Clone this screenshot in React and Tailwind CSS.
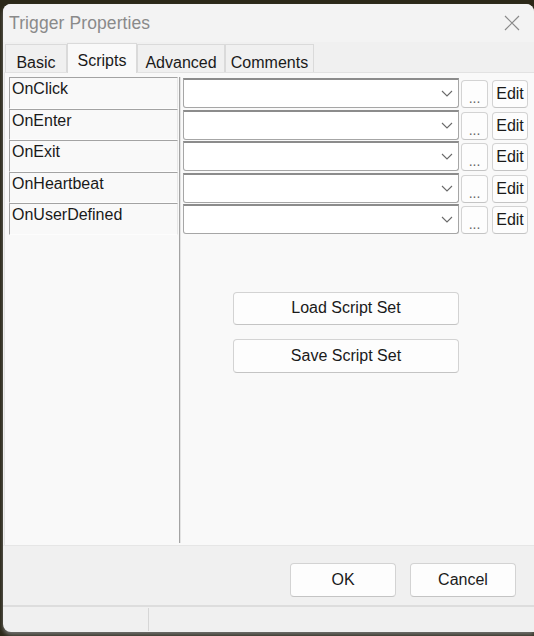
import React from 'react';

const events = ['OnClick', 'OnEnter', 'OnExit', 'OnHeartbeat', 'OnUserDefined'];
const tabs = ['Basic', 'Scripts', 'Advanced', 'Comments'];

function Chevron() {
  return (
    <svg width="12" height="7" viewBox="0 0 12 7" className="shrink-0">
      <path d="M1 1 L6 6 L11 1" fill="none" stroke="#6b6b6b" strokeWidth="1.1" />
    </svg>
  );
}

function SmallButton({ children, className = '' }) {
  return (
    <div
      className={`flex items-center justify-center bg-[#fdfdfd] border border-[#d3d3d3] border-b-[#c4c4c4] rounded-[4px] ${className}`}
    >
      {children}
    </div>
  );
}

export default function App() {
  return (
    <div className="w-[534px] h-[636px] overflow-hidden bg-[#2b2818] pt-[4px] pl-[3px] font-['Liberation_Sans',Arial,sans-serif] text-[16px] text-[#1a1a1a]">
      <div className="w-[531px] h-[628px] flex flex-col bg-[#f0f0f0] rounded-t-[8px] rounded-bl-[8px] overflow-hidden shadow-[0_3px_4px_rgba(120,120,120,0.9)]">
        {/* title bar */}
        <div className="h-[38px] shrink-0 flex items-center justify-between bg-[#f3f3f3] pl-[6px] pr-[14px]">
          <span className="text-[17.5px] text-[#8a8a8a] tracking-[0.1px]">Trigger Properties</span>
          <svg width="16" height="16" viewBox="0 0 16 16">
            <path d="M1 1 L15 15 M15 1 L1 15" stroke="#8a8a8a" strokeWidth="1.2" />
          </svg>
        </div>

        {/* tab strip */}
        <div className="h-[30px] shrink-0 flex items-end pl-[2px] pt-[1px]">
          {tabs.map((t) => {
            const active = t === 'Scripts';
            return active ? (
              <div
                key={t}
                className="relative z-10 h-[30px] -mb-px w-[70px] flex items-start justify-center pt-[5px] bg-[#f9f9f9] border border-b-0 border-[#dadada]"
              >
                {t}
              </div>
            ) : (
              <div
                key={t}
                className={`h-[28px] flex items-start justify-center pt-[6px] border border-b-0 border-[#dadada] bg-[#f0f0f0] ${
                  t === 'Basic' ? 'w-[62px]' : t === 'Advanced' ? 'w-[88px]' : 'w-[89px]'
                }`}
              >
                {t}
              </div>
            );
          })}
        </div>

        {/* tab panel */}
        <div className="h-[473px] shrink-0 ml-[1px] flex bg-[#f9f9f9] border-t border-l border-[#e2e2e2] pt-[4px] pl-[4px] pb-[2px]">
          <div className="w-[169px] flex flex-col">
            {events.map((e) => (
              <div
                key={e}
                className="h-[31.6px] shrink-0 border-t border-l border-[#a3a3a3] border-r border-r-[#e6e6e6] border-b border-b-[#fdfdfd] pl-[2px] pt-[1px] leading-[20px]"
              >
                {e}
              </div>
            ))}
          </div>

          <div className="w-[2px] ml-[1px] h-[466px] border-l border-[#a3a3a3] border-r border-r-[#e3e3e3]" />

          <div className="flex-1 flex flex-col pl-[2px] pt-[1px]">
            {events.map((e) => (
              <div key={e} className="h-[31.6px] shrink-0 flex items-start">
                <div className="w-[276px] h-[30px] bg-white border border-[#a6a6a6] border-t-2 border-t-[#8c8c8c] rounded-b-[3px] flex items-center justify-end pr-[5px]">
                  <Chevron />
                </div>
                <SmallButton className="ml-[2px] mt-[2px] w-[27px] h-[28px] text-[14px] text-[#666] items-end pb-[3px] leading-[12px]">
                  ...
                </SmallButton>
                <SmallButton className="ml-[4px] mt-[2px] w-[36px] h-[28px]">Edit</SmallButton>
              </div>
            ))}

            <SmallButton className="ml-[50px] mt-[56px] w-[226px] h-[33px]">Load Script Set</SmallButton>
            <SmallButton className="ml-[50px] mt-[14px] w-[226px] h-[34px]">Save Script Set</SmallButton>
          </div>
        </div>

        {/* footer */}
        <div className="h-[60px] shrink-0 flex items-start justify-end gap-[14px] pr-[18px] pt-[17px] border-t border-[#e6e6e6]">
          <SmallButton className="w-[106px] h-[34px]">OK</SmallButton>
          <SmallButton className="w-[106px] h-[34px]">Cancel</SmallButton>
        </div>

        {/* status bar */}
        <div className="flex-1 flex border-t-2 border-[#dddddd]">
          <div className="w-[146px] border-r border-[#d6d6d6] my-[1px]" />
          <div className="flex-1" />
        </div>
      </div>
    </div>
  );
}
